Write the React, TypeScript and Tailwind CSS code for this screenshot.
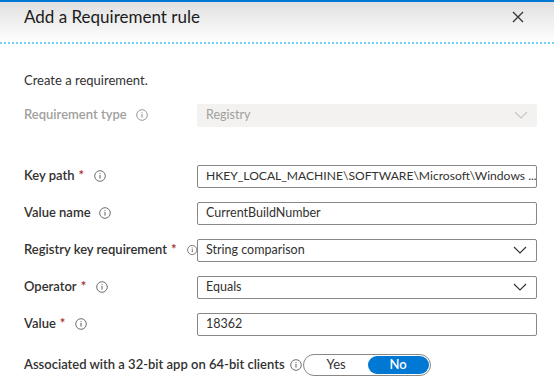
import React from "react";

const Info = ({ className = "" }: { className?: string }) => (
  <svg width="12" height="12" viewBox="0 0 12 12" className={className}>
    <circle cx="6" cy="6" r="5.3" fill="none" stroke="#605e5c" strokeWidth="0.9" />
    <rect x="5.5" y="5" width="1" height="3.6" fill="#605e5c" />
    <rect x="5.5" y="3.2" width="1" height="1" fill="#605e5c" />
  </svg>
);

const Chevron = ({ color = "#323130" }: { color?: string }) => (
  <svg width="14" height="8" viewBox="0 0 14 8">
    <path d="M1 1 L7 7 L13 1" fill="none" stroke={color} strokeWidth="1.1" />
  </svg>
);

const Star = () => <span className="text-[#a4262c] ml-[4px]">*</span>;

function Row({
  label,
  required,
  children,
}: {
  label: string;
  required?: boolean;
  children: React.ReactNode;
}) {
  return (
    <div className="flex items-center h-[23px]">
      <div className="w-[173px] flex items-center font-semibold text-[#323130] whitespace-nowrap">
        <span>{label}</span>
        {required && <Star />}
        <Info className={required ? "ml-[10px]" : "ml-[8px]"} />
      </div>
      {children}
    </div>
  );
}

const TextBox = ({ value, small }: { value: string; small?: boolean }) => (
  <div
    className={`w-[340px] h-[23px] border border-[#8a8886] rounded-[2px] px-[8px] flex items-center text-[#323130] whitespace-nowrap overflow-hidden ${
      small ? "text-[12.1px]" : "text-[12.5px]"
    }`}
  >
    {value}
  </div>
);

const Dropdown = ({ value }: { value: string }) => (
  <div className="w-[340px] h-[23px] border border-[#8a8886] rounded-[2px] pl-[8px] pr-[9px] flex items-center justify-between text-[#323130] text-[12.5px]">
    <span>{value}</span>
    <Chevron />
  </div>
);

export default function App() {
  return (
    <div
      className="w-[554px] h-[386px] bg-white overflow-hidden text-[13px]"
      style={{ fontFamily: "Lato, 'Open Sans', sans-serif" }}
    >
      <div className="h-[2px] bg-[#0078d4]" />
      <div className="h-[40px] bg-gradient-to-b from-[#e0e0e0] to-white flex items-center justify-between pl-[24px] pr-[30px]">
        <span className="text-[17px] text-[#1b1b1b] leading-none -mt-[12px]">Add a Requirement rule</span>
        <svg width="12" height="12" viewBox="0 0 12 12" className="-mt-[10px]">
          <path d="M1 1 L11 11 M11 1 L1 11" stroke="#333" strokeWidth="1.3" />
        </svg>
      </div>
      <div className="border-t-2 border-dotted border-[#6fd3f5]" />

      <div className="pl-[24px]">
        <div className="mt-[27px] text-[#323130]">Create a requirement.</div>

        <div className="flex items-center h-[23px] mt-[13px]">
          <div className="w-[173px] flex items-center font-semibold text-[#a19f9d]">
            <span>Requirement type</span>
            <Info className="ml-[9px] opacity-70" />
          </div>
          <div className="w-[340px] h-[23px] bg-[#f3f2f1] rounded-[2px] pl-[9px] pr-[9px] flex items-center justify-between text-[#a19f9d] text-[12.5px]">
            <span>Registry</span>
            <Chevron color="#c8c6c4" />
          </div>
        </div>

        <div className="mt-[38px] flex flex-col gap-[14px]">
          <Row label="Key path" required>
            <TextBox value="HKEY_LOCAL_MACHINE\SOFTWARE\Microsoft\Windows ..." small />
          </Row>
          <Row label="Value name">
            <TextBox value="CurrentBuildNumber" />
          </Row>
          <Row label="Registry key requirement" required>
            <Dropdown value="String comparison" />
          </Row>
          <Row label="Operator" required>
            <Dropdown value="Equals" />
          </Row>
          <Row label="Value" required>
            <TextBox value="18362" />
          </Row>
        </div>

        <div className="flex items-center mt-[18px] font-semibold text-[#323130]">
          <span>Associated with a 32-bit app on 64-bit clients</span>
          <Info className="ml-[5px]" />
          <div className="ml-[1px] w-[128px] h-[22px] border border-[#8a8886] rounded-full flex items-center p-[1px] font-normal">
            <div className="flex-1 text-center text-[#323130]">Yes</div>
            <div className="w-[61px] h-[18px] bg-[#0078d4] rounded-full text-white flex items-center justify-center font-semibold">
              No
            </div>
          </div>
        </div>
      </div>
    </div>
  );
}
